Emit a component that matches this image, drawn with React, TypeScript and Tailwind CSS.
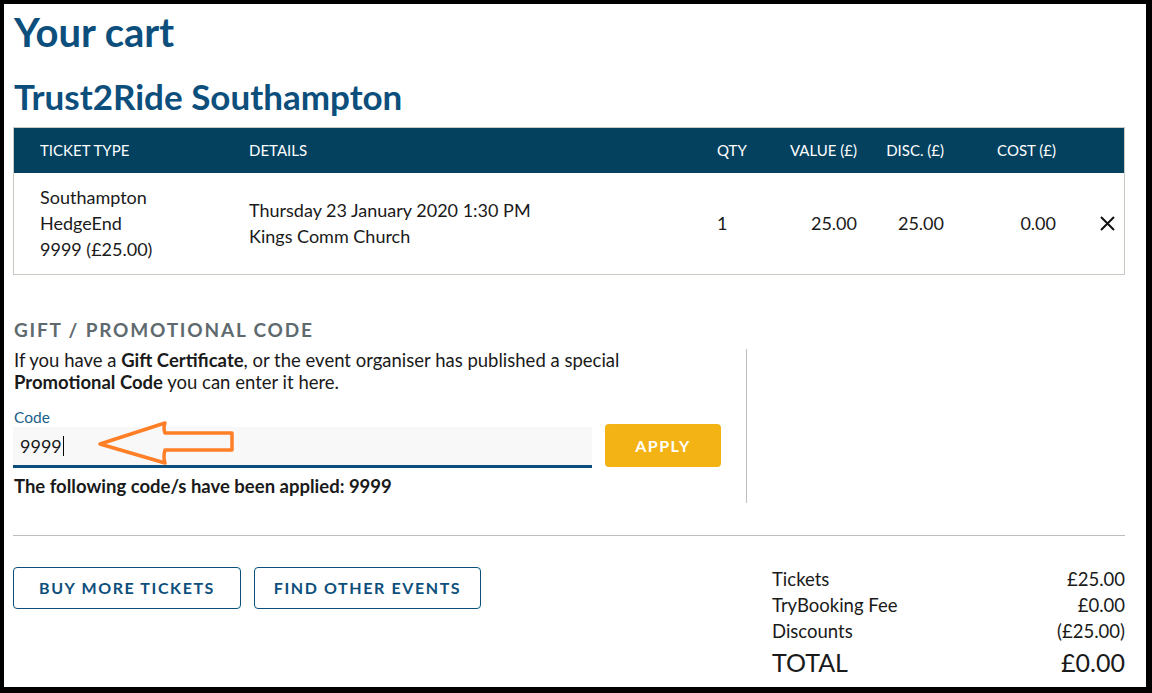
import React from "react";

const font = { fontFamily: "Lato, 'Open Sans', sans-serif" };

export default function App() {
  return (
    <div className="w-[1152px] h-[693px] bg-black pt-[4px] pl-[4px] pr-[6px] pb-[6px]" style={font}>
      <div className="relative bg-white h-full pl-[9px] pr-[21px] text-[#1a1a1a] overflow-hidden">
        <h1 className="text-[40px] leading-[48px] font-bold text-[#0d4f7c] pt-[4px] pl-[1px]">Your cart</h1>
        <h2 className="text-[35px] leading-[40px] font-bold text-[#0d4f7c] mt-[20px] pl-[1px]">Trust2Ride Southampton</h2>

        {/* Table */}
        <div className="mt-[11px] border border-[#c9cac2]">
          <div className="grid grid-cols-[209px_468px_76px_90px_87px_112px_68px] h-[45px] items-center bg-[#03415f] text-white text-[15px]">
            <div className="pl-[26px] pb-[1px]">TICKET TYPE</div>
            <div className="pl-[26px] pb-[1px]">DETAILS</div>
            <div className="pl-[26px] pb-[1px]">QTY</div>
            <div className="text-right pb-[1px]">VALUE (£)</div>
            <div className="text-right pb-[1px]">DISC. (£)</div>
            <div className="text-right pb-[1px]">COST (£)</div>
            <div></div>
          </div>
          <div className="grid grid-cols-[209px_468px_76px_90px_87px_112px_68px] items-center pt-[11px] pb-[12px] text-[18px] leading-[26px]">
            <div className="pl-[26px]">
              <div>Southampton</div>
              <div>HedgeEnd</div>
              <div>9999 (£25.00)</div>
            </div>
            <div className="pl-[26px]">
              <div>Thursday 23 January 2020 1:30 PM</div>
              <div>Kings Comm Church</div>
            </div>
            <div className="pl-[26px]">1</div>
            <div className="text-right">25.00</div>
            <div className="text-right">25.00</div>
            <div className="text-right">0.00</div>
            <div className="flex justify-end pr-[9px]">
              <svg width="15" height="15" viewBox="0 0 15 15">
                <path d="M1 1 L14 14 M14 1 L1 14" stroke="#111" strokeWidth="2" fill="none" />
              </svg>
            </div>
          </div>
        </div>

        {/* Gift section */}
        <div className="mt-[41px] pl-[1px] text-[19px] leading-[28px] font-bold tracking-[1.8px] text-[#5e6a6e]">
          GIFT / PROMOTIONAL CODE
        </div>
        <div className="flex mt-[5px]">
          <div className="w-[734px] border-r border-[#bdbdbd] pb-[6px]">
            <p className="text-[18.5px] leading-[22px] pl-[1px]">
              If you have a <b>Gift Certificate</b>, or the event organiser has published a special
              <br />
              <b>Promotional Code</b> you can enter it here.
            </p>
            <div className="mt-[14px] text-[15.5px] leading-[20px] text-[#1b5e8a] pl-[1px]">Code</div>
            <div className="relative flex items-start gap-[13px]">
              <div className="w-[579px] h-[41px] bg-[#f8f8f8] border-b-[3px] border-[#0d4f7c] flex items-center pl-[7px] text-[18px]">
                <span>9999</span>
                <span className="inline-block w-[1px] h-[20px] bg-black ml-[1px]"></span>
              </div>
              <button className="w-[116px] h-[43px] mt-[-3px] bg-[#f4b315] rounded-[4px] text-white font-bold text-[16px] tracking-[1.5px]">
                APPLY
              </button>
              <svg className="absolute left-[72px] top-[-6px]" width="155" height="46" viewBox="0 0 155 46">
                <path
                  d="M15 23 L80 2 Q78 7 80 12 L147 12 L147 29 L80 29 Q78 36 80 42 Z"
                  fill="none"
                  stroke="#ff7f27"
                  strokeWidth="3.5"
                  strokeLinejoin="round"
                />
              </svg>
            </div>
            <div className="mt-[7px] text-[18.5px] leading-[22px] font-bold pl-[1px]">
              The following code/s have been applied: 9999
            </div>
          </div>
          <div className="flex-1"></div>
        </div>

        <div className="mt-[32px] border-t border-[#bdbdbd]"></div>

        <div className="flex justify-between items-start pt-[31px]">
          <div className="flex gap-[13px]">
            <button className="w-[228px] h-[42px] border border-[#0d4f7c] rounded-[4px] text-[#0d4f7c] font-bold text-[16px] tracking-[1.6px]">
              BUY MORE TICKETS
            </button>
            <button className="w-[227px] h-[42px] border border-[#0d4f7c] rounded-[4px] text-[#0d4f7c] font-bold text-[16px] tracking-[1.6px]">
              FIND OTHER EVENTS
            </button>
          </div>
          <div className="w-[353px] text-[18.5px] leading-[26px] mt-[-1px]">
            <div className="flex justify-between"><span>Tickets</span><span>£25.00</span></div>
            <div className="flex justify-between"><span>TryBooking Fee</span><span>£0.00</span></div>
            <div className="flex justify-between"><span>Discounts</span><span>(£25.00)</span></div>
            <div className="flex justify-between text-[25px] leading-[37px]"><span>TOTAL</span><span>£0.00</span></div>
          </div>
        </div>
      </div>
    </div>
  );
}
